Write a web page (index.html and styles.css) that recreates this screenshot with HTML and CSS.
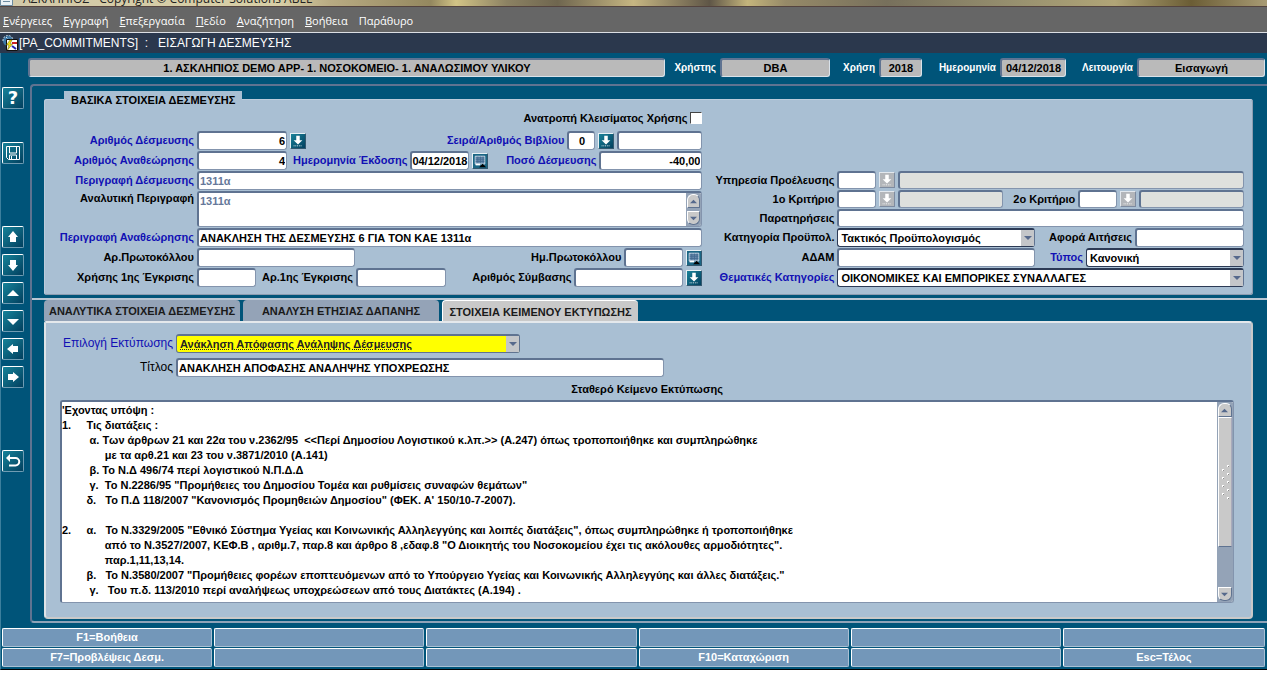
FILE: index.html
```html
<!DOCTYPE html>
<html lang="el">
<head>
    <meta charset="UTF-8">
    <meta name="viewport" content="width=device-width, initial-scale=1.0">
    <title>ΑΣΚΛΗΠΙΟΣ - Εισαγωγή Δέσμευσης</title>
    <link rel="stylesheet" href="styles.css">
</head>
<body>
    <!-- shared icons -->
    <svg class="sprites" aria-hidden="true">
        <symbol id="i-list" viewBox="0 0 16 16">
            <path fill="#fff" d="M6 2h4v5h3L8 12 3 7h3z"/>
            <path stroke="#fff" stroke-dasharray="1 1" d="M3 13.500h10"/>
        </symbol>
        <symbol id="i-cal" viewBox="0 0 16 16">
            <path fill="#6f93b5" stroke="#d3dfea" d="M2.500 2.500h11v9h-11z"/>
            <path stroke="#43698f" d="M3 4.500h10M3 6.500h10M3 8.500h10M5.500 3v7M8.500 3v7M11.500 3v7"/>
            <path fill="#fff" d="M3 11h5v2H3z"/>
            <path fill="#000" d="M7 15l4-4 4 4z"/>
        </symbol>
        <symbol id="i-up" viewBox="0 0 8 8"><path fill="#56698c" d="M0 6l4-4 4 4z"/></symbol>
        <symbol id="i-down" viewBox="0 0 8 8"><path fill="#56698c" d="M0 2h8L4 6z"/></symbol>
    </svg>

    <header class="window-title">
        <svg class="window-icon" width="13" height="13" viewBox="0 0 13 13"><path fill="#e8f0f4" stroke="#6c8ba0" d="M.5.5h10l2 3v9H.5z"/><path stroke="#6c8ba0" d="M3 5.500h6M3 8.500h7"/></svg>
        <span>ΑΣΚΛΗΠΙΟΣ - Copyright © Computer Solutions ABEE</span>
    </header>
    <nav class="menu">
        <a href="#"><u>Ε</u>νέργειες</a>
        <a href="#"><u>Ε</u>γγραφή</a>
        <a href="#"><u>Ε</u>πεξεργασία</a>
        <a href="#"><u>Π</u>εδίο</a>
        <a href="#"><u>Α</u>ναζήτηση</a>
        <a href="#"><u>Β</u>οήθεια</a>
        <a href="#">Παράθυρο</a>
    </nav>
    <div class="form-title">
        <svg width="16" height="16" viewBox="0 0 16 16">
            <circle cx="6" cy="6" r="5" fill="#3e79a8"/>
            <path stroke="#c7dfee" stroke-dasharray="2 1" fill="none" d="M1 6a5 5 0 0 1 10-1M4 2l4 4"/>
            <path fill="#fff" stroke="#111" d="M4.500 4.500h11v11h-11z"/>
            <path fill="#f3e417" stroke="#6b6200" stroke-width=".5" d="M8 5L4.500 10h2.500l-1.500 5 5-6H8l2-4z"/>
            <path stroke="#c22" stroke-width="2" d="M10 8h5"/>
            <path stroke="#22a" stroke-width="2" d="M10 11l4 3"/>
        </svg>
        <h1>[PA_COMMITMENTS] &nbsp;: &nbsp; ΕΙΣΑΓΩΓΗ ΔΕΣΜΕΥΣΗΣ</h1>
    </div>

    <main class="workspace">
        <div class="status">
            <input type="text" aria-label="Εφαρμογή" value="1. ΑΣΚΛΗΠΙΟΣ DEMO APP- 1. ΝΟΣΟΚΟΜΕΙΟ- 1. ΑΝΑΛΩΣΙΜΟΥ ΥΛΙΚΟΥ" readonly>
            <label for="user">Χρήστης</label>
            <input type="text" id="user" value="DBA" readonly>
            <label for="year">Χρήση</label>
            <input type="text" id="year" value="2018" readonly>
            <label for="today">Ημερομηνία</label>
            <input type="text" id="today" value="04/12/2018" readonly>
            <label for="mode">Λειτουργία</label>
            <input type="text" id="mode" value="Εισαγωγή" readonly>
        </div>

        <div class="columns">
            <div class="toolbar">
                <div class="tools">
                    <button type="button" aria-label="Βοήθεια" class="help">?</button>
                </div>
                <div class="tools tools-save">
                    <button type="button" aria-label="Αποθήκευση"><svg width="18" height="18" viewBox="0 0 18 18"><path fill="none" stroke="#fff" d="M2.500 2.500h13v13h-11l-2-2zM5.500 3v6h7V3M5.500 15v-4h7v4M7.500 12v3"/></svg></button>
                </div>
                <div class="tools tools-far">
                    <button type="button" aria-label="Πρώτη"><svg width="18" height="18" viewBox="0 0 18 18"><path fill="#fff" d="M9 3l5 6h-2v5H6V9H4z"/></svg></button>
                    <button type="button" aria-label="Τελευταία"><svg width="18" height="18" viewBox="0 0 18 18"><path fill="#fff" d="M9 15l5-6h-2V4H6v5H4z"/></svg></button>
                    <button type="button" aria-label="Πάνω"><svg width="18" height="18" viewBox="0 0 18 18"><path fill="#fff" d="M9 6l6 6H3z"/></svg></button>
                    <button type="button" aria-label="Κάτω"><svg width="18" height="18" viewBox="0 0 18 18"><path fill="#fff" d="M9 13l6-6H3z"/></svg></button>
                    <button type="button" aria-label="Προηγούμενο"><svg width="18" height="18" viewBox="0 0 18 18"><path fill="#fff" d="M3 9l6-5v2h5v6H9v2z"/></svg></button>
                    <button type="button" aria-label="Επόμενο"><svg width="18" height="18" viewBox="0 0 18 18"><path fill="#fff" d="M15 9l-6-5v2H4v6h5v2z"/></svg></button>
                </div>
                <div class="tools tools-far">
                    <button type="button" aria-label="Επιστροφή"><svg width="18" height="18" viewBox="0 0 18 18"><path fill="none" stroke="#fff" stroke-width="2" d="M5 6h6.500a3.500 3.500 0 0 1 0 7.500H5"/><path fill="#fff" d="M2 6l4-4v8z"/></svg></button>
                </div>
            </div>

            <div class="frame">
                <form class="upper">
                    <fieldset>
                        <legend>ΒΑΣΙΚΑ ΣΤΟΙΧΕΙΑ ΔΕΣΜΕΥΣΗΣ</legend>
                        <div class="fields">
                            <div class="left">
                                <div class="row row-top">
                                    <label for="override" class="push">Ανατροπή Κλεισίματος Χρήσης</label>
                                    <input type="checkbox" id="override">
                                </div>
                                <div class="row">
                                    <label for="num" class="lead blue">Αριθμός Δέσμευσης</label>
                                    <input type="text" id="num" class="w-num right" value="6">
                                    <button type="button" class="pop" aria-label="Λίστα δεσμεύσεων"><svg><use href="#i-list"/></svg></button>
                                    <label for="series" class="blue push">Σειρά/Αριθμός Βιβλίου</label>
                                    <input type="text" id="series" class="w-tiny center" value="0">
                                    <button type="button" class="pop" aria-label="Λίστα βιβλίων"><svg><use href="#i-list"/></svg></button>
                                    <input type="text" class="w-book" aria-label="Αριθμός βιβλίου">
                                </div>
                                <div class="row">
                                    <label for="rev" class="lead blue">Αριθμός Αναθεώρησης</label>
                                    <input type="text" id="rev" class="w-num right" value="4">
                                    <label for="issued" class="blue">Ημερομηνία Έκδοσης</label>
                                    <input type="text" id="issued" class="w-date" value="04/12/2018">
                                    <button type="button" class="pop cal" aria-label="Ημερολόγιο"><svg><use href="#i-cal"/></svg></button>
                                    <label for="amount" class="blue push">Ποσό Δέσμευσης</label>
                                    <input type="text" id="amount" class="w-amount right" value="-40,00">
                                </div>
                                <div class="row">
                                    <label for="descr" class="lead blue">Περιγραφή Δέσμευσης</label>
                                    <input type="text" id="descr" class="grow muted" value="1311α">
                                </div>
                                <div class="row row-tall">
                                    <label for="details" class="lead">Αναλυτική Περιγραφή</label>
                                    <div class="memo grow">
                                        <textarea id="details" class="muted">1311α</textarea>
                                        <div class="scroll">
                                            <button type="button" class="cap-top" aria-label="Πάνω"><svg><use href="#i-up"/></svg></button>
                                            <button type="button" class="cap-bottom" aria-label="Κάτω"><svg><use href="#i-down"/></svg></button>
                                        </div>
                                    </div>
                                </div>
                                <div class="row">
                                    <label for="revdescr" class="lead blue">Περιγραφή Αναθεώρησης</label>
                                    <input type="text" id="revdescr" class="grow" value="ΑΝΑΚΛΗΣΗ ΤΗΣ ΔΕΣΜΕΥΣΗΣ 6 ΓΙΑ ΤΟΝ ΚΑΕ 1311α">
                                </div>
                                <div class="row">
                                    <label for="prot" class="lead">Αρ.Πρωτοκόλλου</label>
                                    <input type="text" id="prot" class="w-prot">
                                    <label for="protdate" class="push">Ημ.Πρωτοκόλλου</label>
                                    <input type="text" id="protdate" class="w-date">
                                    <button type="button" class="pop cal" aria-label="Ημερολόγιο"><svg><use href="#i-cal"/></svg></button>
                                </div>
                                <div class="row">
                                    <label for="appyear" class="lead">Χρήσης 1ης Έγκρισης</label>
                                    <input type="text" id="appyear" class="w-date">
                                    <label for="appnum">Αρ.1ης Έγκρισης</label>
                                    <input type="text" id="appnum" class="w-num">
                                    <label for="contract" class="push">Αριθμός Σύμβασης</label>
                                    <input type="text" id="contract" class="w-side">
                                    <button type="button" class="pop" aria-label="Λίστα συμβάσεων"><svg><use href="#i-list"/></svg></button>
                                </div>
                            </div>

                            <div class="right-side">
                                <div class="row row-short">
                                    <label for="dept" class="lead">Υπηρεσία Προέλευσης</label>
                                    <input type="text" id="dept" class="w-code">
                                    <button type="button" class="pop off" aria-label="Λίστα υπηρεσιών"><svg><use href="#i-list"/></svg></button>
                                    <input type="text" class="grow" aria-label="Υπηρεσία" disabled>
                                </div>
                                <div class="row row-short">
                                    <label for="crit1" class="lead">1ο Κριτήριο</label>
                                    <input type="text" id="crit1" class="w-code">
                                    <button type="button" class="pop off" aria-label="Λίστα κριτηρίων"><svg><use href="#i-list"/></svg></button>
                                    <input type="text" class="grow" aria-label="Περιγραφή 1ου κριτηρίου" disabled>
                                    <label for="crit2" class="l-crit">2ο Κριτήριο</label>
                                    <input type="text" id="crit2" class="w-code">
                                    <button type="button" class="pop off" aria-label="Λίστα κριτηρίων"><svg><use href="#i-list"/></svg></button>
                                    <input type="text" class="grow" aria-label="Περιγραφή 2ου κριτηρίου" disabled>
                                </div>
                                <div class="row row-short">
                                    <label for="notes" class="lead">Παρατηρήσεις</label>
                                    <input type="text" id="notes" class="grow">
                                </div>
                                <div class="row">
                                    <label for="cat" class="lead">Κατηγορία Προϋπολ.</label>
                                    <div class="pick grow">
                                        <select id="cat"><option>Τακτικός Προϋπολογισμός</option></select>
                                        <svg><use href="#i-down"/></svg>
                                    </div>
                                    <label for="reqs" class="l-reqs">Αφορά Αιτήσεις</label>
                                    <input type="text" id="reqs" class="w-side">
                                </div>
                                <div class="row">
                                    <label for="adam" class="lead">ΑΔΑΜ</label>
                                    <input type="text" id="adam" class="grow">
                                    <label for="kind" class="l-kind blue">Τύπος</label>
                                    <div class="pick w-prot">
                                        <select id="kind"><option>Κανονική</option></select>
                                        <svg><use href="#i-down"/></svg>
                                    </div>
                                </div>
                                <div class="row">
                                    <label for="theme" class="lead blue">Θεματικές Κατηγορίες</label>
                                    <div class="pick grow">
                                        <select id="theme"><option>ΟΙΚΟΝΟΜΙΚΕΣ ΚΑΙ ΕΜΠΟΡΙΚΕΣ ΣΥΝΑΛΛΑΓΕΣ</option></select>
                                        <svg><use href="#i-down"/></svg>
                                    </div>
                                </div>
                            </div>
                        </div>
                    </fieldset>
                </form>

                <section class="lower">
                    <div class="tabs">
                        <button type="button">ΑΝΑΛΥΤΙΚΑ ΣΤΟΙΧΕΙΑ ΔΕΣΜΕΥΣΗΣ</button>
                        <button type="button">ΑΝΑΛΥΣΗ ΕΤΗΣΙΑΣ ΔΑΠΑΝΗΣ</button>
                        <button type="button" class="active">ΣΤΟΙΧΕΙΑ ΚΕΙΜΕΝΟΥ ΕΚΤΥΠΩΣΗΣ</button>
                    </div>
                    <div class="panel">
                        <div class="row">
                            <label for="print" class="plain blue">Επιλογή Εκτύπωσης</label>
                            <div class="pick print">
                                <select id="print"><option>Ανάκληση Απόφασης Ανάληψης Δέσμευσης</option></select>
                                <svg><use href="#i-down"/></svg>
                            </div>
                        </div>
                        <div class="row">
                            <label for="title" class="plain">Τίτλος</label>
                            <input type="text" id="title" class="w-title" value="ΑΝΑΚΛΗΣΗ ΑΠΟΦΑΣΗΣ ΑΝΑΛΗΨΗΣ ΥΠΟΧΡΕΩΣΗΣ">
                        </div>
                        <label for="text" class="memo-title">Σταθερό Κείμενο Εκτύπωσης</label>
                        <div class="memo memo-big">
                            <textarea id="text" rows="13" wrap="off">'Εχοντας υπόψη :
1.     Τις διατάξεις :
         α. Των άρθρων 21 και 22α του ν.2362/95  &lt;&lt;Περί Δημοσίου Λογιστικού κ.λπ.&gt;&gt; (Α.247) όπως τροποποιήθηκε και συμπληρώθηκε
              με τα αρθ.21 και 23 του ν.3871/2010 (Α.141)
         β. Το Ν.Δ 496/74 περί λογιστικού Ν.Π.Δ.Δ
         γ.  Το Ν.2286/95 "Προμήθειες του Δημοσίου Τομέα και ρυθμίσεις συναφών θεμάτων"
        δ.   Το Π.Δ 118/2007 "Κανονισμός Προμηθειών Δημοσίου" (ΦΕΚ. Α' 150/10-7-2007).

2.     α.   Το Ν.3329/2005 "Εθνικό Σύστημα Υγείας και Κοινωνικής Αλληλεγγύης και λοιπές διατάξεις", όπως συμπληρώθηκε ή τροποποιήθηκε
              από το Ν.3527/2007, ΚΕΦ.Β , αριθμ.7, παρ.8 και άρθρο 8 ,εδαφ.8 "Ο Διοικητής του Νοσοκομείου έχει τις ακόλουθες αρμοδιότητες".
              παρ.1,11,13,14.
        β.   Το Ν.3580/2007 "Προμήθειες φορέων εποπτευόμενων από το Υπούργειο Υγείας και Κοινωνικής Αλληλεγγύης και άλλες διατάξεις."
         γ.   Του π.δ. 113/2010 περί αναλήψεως υποχρεώσεων από τους Διατάκτες (Α.194) .</textarea>
                            <div class="scroll">
                                <button type="button" class="cap-top" aria-label="Πάνω"><svg><use href="#i-up"/></svg></button>
                                <div class="thumb">
                                    <svg width="10" height="36" viewBox="0 0 10 36">
                                        <path stroke="#fff" stroke-width="2" stroke-dasharray="2 6" d="M8 1v34M3 5v29"/>
                                        <path stroke="#8d8d8d" stroke-dasharray="1 7" d="M8.500 2v34M3.500 6v28"/>
                                    </svg>
                                </div>
                                <button type="button" class="cap-bottom" aria-label="Κάτω"><svg><use href="#i-down"/></svg></button>
                            </div>
                        </div>
                    </div>
                </section>
            </div>
        </div>

        <div class="keys">
            <button type="button">F1=Βοήθεια</button>
            <button type="button"></button>
            <button type="button"></button>
            <button type="button"></button>
            <button type="button"></button>
            <button type="button"></button>
            <button type="button">F7=Προβλέψεις Δεσμ.</button>
            <button type="button"></button>
            <button type="button"></button>
            <button type="button">F10=Καταχώριση</button>
            <button type="button"></button>
            <button type="button">Esc=Τέλος</button>
        </div>
    </main>
</body>
</html>
```

FILE: styles.css
```css
* {
    box-sizing: border-box;
    margin: 0;
    padding: 0;
}

body {
    font: bold 11px/15px "Liberation Sans", Arial, sans-serif;
    color: #000;
    background: #fff;
}

input, select, textarea, button {
    font: inherit;
    color: inherit;
}

svg {
    display: block;
}

.sprites {
    width: 0;
    height: 0;
    position: absolute;
}

/* window bars */
.window-title {
    display: flex;
    align-items: flex-end;
    gap: 10px;
    height: 7px;
    overflow: hidden;
    font: 12px/15px "Open Sans", sans-serif;
    color: #222;
    border-bottom: 1px solid #54443f;
    background: linear-gradient(90deg, #d2c9a8 0, #d8cfa6 22%, #b9ab83 26%, #94885f 34%, #d2c486 36%, #8c8263 40%, #6f664f 44%, #c6b682 50%, #5f5647 56%, #c4b57c 59%, #968a68 62%, #77705c 70%, #97906f 80%, #b1a577 88%, #6b5d35 94%, #a89b74 100%);
}

.window-icon {
    flex: none;
}

.window-title span {
    white-space: nowrap;
}

.menu {
    display: flex;
    gap: 11px;
    align-items: center;
    height: 26px;
    padding: 2px 3px 0;
    background: #666;
    border-bottom: 1px solid #dcdfe4;
}

.menu a {
    font: 11px/16px "Open Sans", "Noto Sans", sans-serif;
    color: #fff;
    text-decoration: none;
}

.form-title {
    display: flex;
    align-items: center;
    gap: 1px;
    height: 20px;
    padding-left: 2px;
    background: #2b384d;
    color: #fff;
}

.form-title h1 {
    font: 12px/16px "Liberation Sans", Arial, sans-serif;
}

/* work area */
.workspace {
    background: #005479;
    border-left: 1px solid #3c7f9d;
    border-bottom: 1px solid #000;
    padding: 5px 2px 2px 1px;
}

.status {
    display: grid;
    grid-template-columns: 1fr 55px 110px 49px 43px 78px 66px 71px 128px;
    align-items: center;
    margin-left: 26px;
}

.status label {
    font-size: 10px;
    color: #fff;
    text-align: right;
    padding-right: 4px;
}

.status input {
    width: 100%;
    height: 19px;
    text-align: center;
    background: #bababa;
    border: 2px solid #5f7391;
    border-right: 1px solid #d9e2ea;
    border-bottom: 1px solid #d9e2ea;
    border-radius: 3px;
}

.columns {
    display: flex;
    margin: 7px -2px 0 0;
}

.toolbar {
    flex: none;
    width: 28px;
    padding-top: 3px;
}

.tools {
    display: grid;
    gap: 6px;
}

.tools-save {
    margin-top: 33px;
}

.tools-far {
    margin-top: 62px;
}

.tools button {
    width: 22px;
    height: 22px;
    display: flex;
    align-items: center;
    justify-content: center;
    border: 1px solid;
    border-color: #fff #6f9cb3 #6f9cb3 #fff;
    border-radius: 2px;
    background: linear-gradient(135deg, #168299, #02405f);
    color: #fff;
}

.tools .help {
    font: bold 18px/18px "DejaVu Sans", sans-serif;
}

.frame {
    flex: 1;
    min-width: 0;
    border: 2px solid #5f7391;
    border-right: 0;
    border-bottom-color: #8fa3b8;
    border-radius: 4px 0 0 4px;
}

.upper {
    padding: 5px 14px 3px 12px;
}

fieldset {
    min-width: 0;
    border: 1px solid #bccbdb;
    border-right-color: #8c9cb0;
    border-bottom-color: #8c9cb0;
    border-radius: 3px;
    background: #a9bfd3;
}

legend {
    margin-left: 19px;
    padding: 2px 7px 0;
    height: 17px;
    background: #a9bfd3;
}

.fields {
    display: grid;
    grid-template-columns: 658fr 550fr;
    padding-bottom: 7px;
}

.left, .right-side {
    display: grid;
    gap: 1px;
    align-content: end;
    padding-top: 3px;
    min-width: 0;
}

.right-side {
    padding-right: 8px;
}

.row {
    display: flex;
    align-items: center;
    gap: 3px;
    height: 19px;
    min-width: 0;
}

.row-top {
    height: 14px;
    margin-bottom: 5px;
}

.row-short {
    height: 18px;
}

.row-tall {
    height: 36px;
    align-items: flex-start;
}

.row label {
    padding-left: 3px;
    white-space: nowrap;
}

.row .lead {
    flex: none;
    width: 149px;
    padding: 0;
    text-align: right;
}

.right-side .lead {
    width: 132px;
}

.row .blue {
    color: #1110b4;
}

.row .push {
    margin-left: auto;
}

.grow {
    flex: 1;
    min-width: 0;
}

.row input[type="text"], .memo, .pick select {
    height: 100%;
    padding: 0 1px;
    background: #fff;
    border: 2px solid #5f7391;
    border-right: 1px solid #8394ad;
    border-bottom: 1px solid #8394ad;
    border-radius: 3px;
}

.row input[type="text"].w-date {
    padding: 0;
}

.row input[type="text"]:disabled {
    background: #dee0dd;
}

.row input[type="checkbox"] {
    appearance: none;
    width: 12px;
    height: 12px;
    background: #fff;
    border: 1px solid;
    border-color: #444 #fff #fff #444;
}

.muted, .row .muted {
    color: #65789a;
}

.right {
    text-align: right;
}

.center {
    text-align: center;
}

.w-tiny { width: 28px; }
.w-code { width: 39px; }
.w-date { width: 59px; }
.w-book { width: 85px; }
.w-num { width: 90px; }
.w-amount { width: 103px; }
.w-side { width: 109px; }
.w-prot { width: 158px; }
.w-title { width: 488px; }

.l-crit, .l-kind, .l-reqs {
    flex: none;
    text-align: right;
}

.l-crit { width: 69px; }
.l-kind { width: 45px; }
.l-reqs { width: 94px; }

.pop {
    flex: none;
    width: 16px;
    height: 16px;
    border: 1px solid;
    border-color: #e8f1f5 #33586f #33586f #e8f1f5;
    background: linear-gradient(135deg, #1a8299, #02405f);
}

.pop svg {
    width: 14px;
    height: 14px;
}

.pop.cal {
    background: #1b6685;
}

.pop.off {
    background: #b3b6ba;
    border-color: #e2e8ee #7d8ba0 #7d8ba0 #e2e8ee;
}

.pick {
    position: relative;
    height: 100%;
}

.pick select {
    appearance: none;
    display: block;
    width: 100%;
    padding: 1px 16px 0 3px;
    border: 1px solid #2c3a55;
    border-top-width: 2px;
    border-right-color: #5f7391;
}

/* arrow box at the end of a drop-down */
.pick svg {
    position: absolute;
    top: 2px;
    right: 1px;
    bottom: 1px;
    width: 13px;
    height: 16px;
    padding: 3px 2px 3px 3px;
    background: #c4c6c9;
    pointer-events: none;
}

.memo {
    display: flex;
    overflow: hidden;
    padding: 0;
}

.memo textarea {
    flex: 1;
    min-width: 0;
    padding: 1px;
    border: 0;
    resize: none;
    overflow: hidden;
    background: #fff;
}

.scroll {
    flex: none;
    width: 15px;
    display: flex;
    flex-direction: column;
    padding: 1px;
    background: #94a3b7;
}

.scroll button {
    flex: none;
    width: 13px;
    height: 14px;
    padding: 3px 2px;
    border: 1px solid;
    border-color: #fff #5f7391 #5f7391 #fff;
    background: #c9c9c9;
}

.scroll button svg {
    width: 7px;
    height: 7px;
}

.scroll .cap-top {
    border-radius: 6px 6px 0 0;
}

.scroll .cap-bottom {
    margin-top: auto;
    border-radius: 0 0 6px 6px;
}

.thumb {
    display: flex;
    align-items: center;
    justify-content: center;
    height: 130px;
    border: 1px solid;
    border-color: #fff #aab #5f7391 #fff;
    background: #c9c9c9;
}

/* tabs */
.lower {
    border-top: 2px solid #b9c6d3;
    padding: 0 14px 2px 12px;
}

.tabs {
    display: flex;
    gap: 3px;
}

.tabs button {
    width: 196px;
    height: 21px;
    padding-top: 2px;
    border: 0;
    border-radius: 4px 4px 0 0;
    background: #94a3b7;
    color: #1a1a1a;
    white-space: nowrap;
}

.tabs .active {
    background: #c9c9c9;
    border-top: 1px solid #fff;
    border-left: 1px solid #fff;
}

.panel {
    padding: 11px 17px 14px 14px;
    background: #a9bfd3;
    border: 2px solid #c9c9c9;
    border-top-color: #e4e8ec;
    border-left-color: #dfe3e7;
    border-radius: 2px 4px 4px 4px;
}

.panel .row {
    margin-bottom: 5px;
}

.row .plain {
    flex: none;
    width: 113px;
    padding: 0;
    text-align: right;
    font-weight: normal;
    font-size: 12px;
}

.print {
    width: 344px;
}

.print select {
    background: #ff0;
    color: #222;
    text-decoration: underline dotted;
    border-color: #5f7391;
}

.memo-title {
    display: block;
    text-align: center;
    padding-bottom: 3px;
}

.memo-big {
    height: auto;
}

.memo-big textarea {
    padding: 1px 0 4px;
}

.memo-big .scroll {
    width: 16px;
}

.memo-big .cap-top, .memo-big .cap-bottom {
    width: 14px;
}

/* function keys */
.keys {
    display: grid;
    grid-template-columns: repeat(5, 210fr) 202fr;
    gap: 1px 2px;
    margin-top: 5px;
}

.keys button {
    height: 19px;
    background: #7397b9;
    color: #fff;
    border: 1px solid;
    border-color: #fff #a9c0d4 #a9c0d4 #fff;
    border-radius: 2px;
}
```
